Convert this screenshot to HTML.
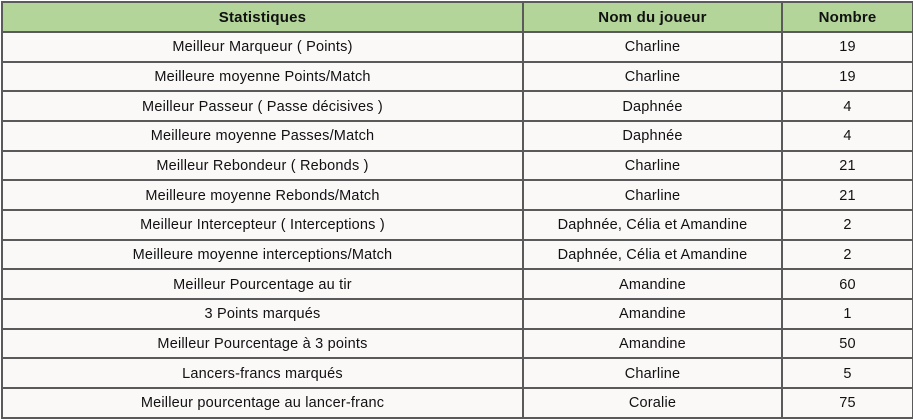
<!DOCTYPE html>
<html><head><meta charset="utf-8"><style>
html,body{margin:0;padding:0;background:#fff;width:913px;height:418px;overflow:hidden}
table{position:absolute;left:1px;top:1px;border-collapse:collapse;table-layout:fixed;width:911px;font-family:"Comic Sans MS","Liberation Sans",sans-serif;font-size:14.5px;letter-spacing:0.2px;color:#111}
td,th{border:2px solid #5a5a5a;text-align:center;padding:1px 0 0 0;background:#fbf8f8;height:26.67px;white-space:nowrap}
th{background:#b3d59a;font-weight:bold;height:27px;font-size:15px}
</style></head><body>
<table>
<colgroup><col style="width:521px"><col style="width:259px"><col style="width:131px"></colgroup>
<tr><th>Statistiques</th><th>Nom du joueur</th><th>Nombre</th></tr>
<tr><td>Meilleur Marqueur ( Points)</td><td>Charline</td><td>19</td></tr>
<tr><td>Meilleure moyenne Points/Match</td><td>Charline</td><td>19</td></tr>
<tr><td>Meilleur Passeur ( Passe décisives )</td><td>Daphnée</td><td>4</td></tr>
<tr><td>Meilleure moyenne Passes/Match</td><td>Daphnée</td><td>4</td></tr>
<tr><td>Meilleur Rebondeur ( Rebonds )</td><td>Charline</td><td>21</td></tr>
<tr><td>Meilleure moyenne Rebonds/Match</td><td>Charline</td><td>21</td></tr>
<tr><td>Meilleur Intercepteur ( Interceptions )</td><td>Daphnée, Célia et Amandine</td><td>2</td></tr>
<tr><td>Meilleure moyenne interceptions/Match</td><td>Daphnée, Célia et Amandine</td><td>2</td></tr>
<tr><td>Meilleur Pourcentage au tir</td><td>Amandine</td><td>60</td></tr>
<tr><td>3 Points marqués</td><td>Amandine</td><td>1</td></tr>
<tr><td>Meilleur Pourcentage à 3 points</td><td>Amandine</td><td>50</td></tr>
<tr><td>Lancers-francs marqués</td><td>Charline</td><td>5</td></tr>
<tr><td>Meilleur pourcentage au lancer-franc</td><td>Coralie</td><td>75</td></tr>
</table>
</body></html>
